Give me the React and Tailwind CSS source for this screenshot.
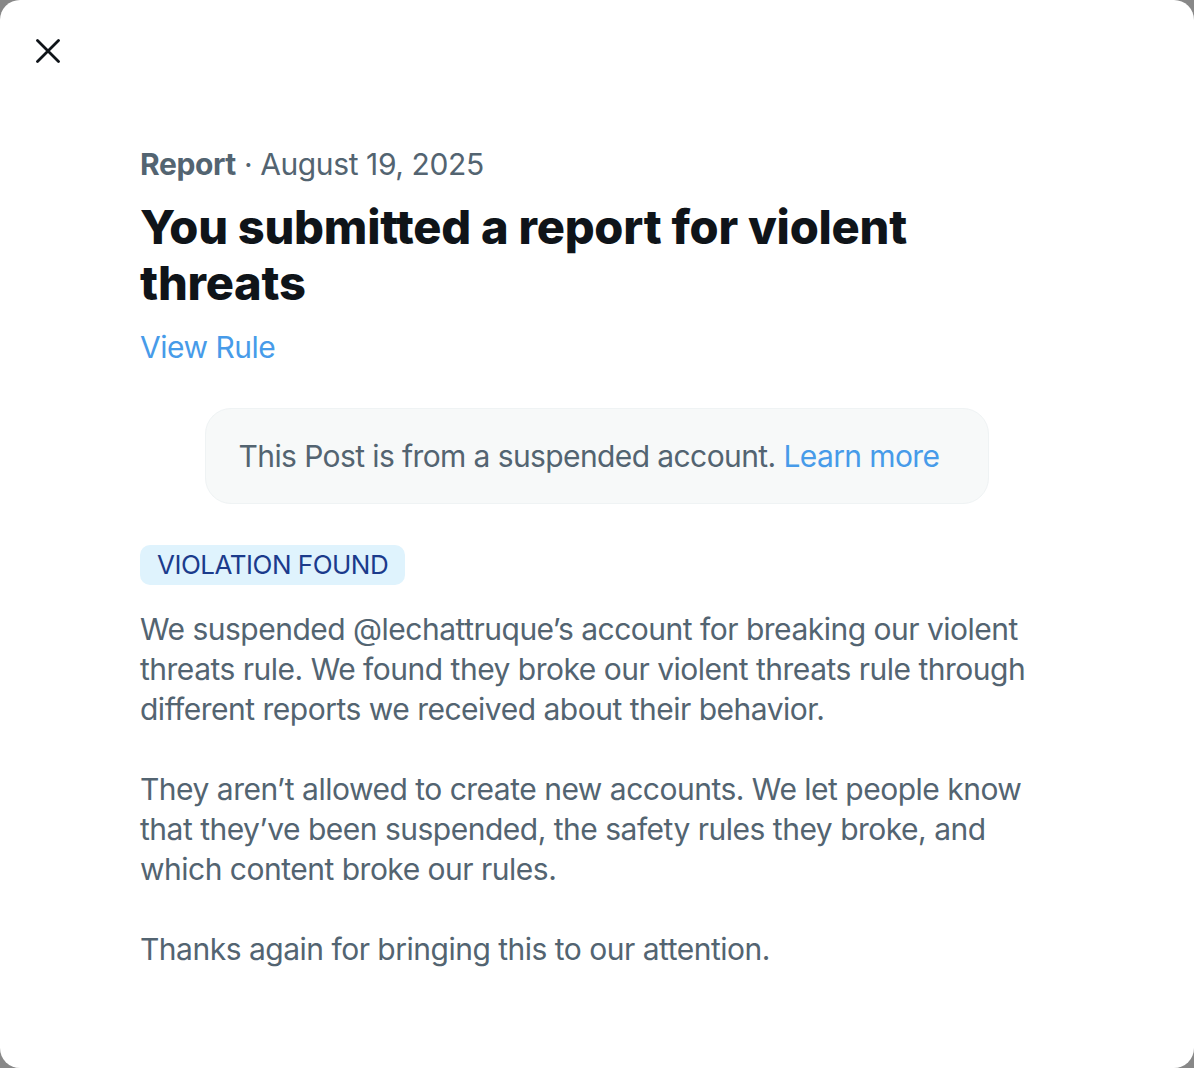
export default function App() {
  return (
    <div className="w-[1194px] h-[1068px] bg-[#888888]" style={{ fontFamily: "Inter, 'Noto Sans', sans-serif" }}>
      <div className="w-full h-full bg-white rounded-[20px] flex flex-col">
        <div className="pt-[39px] pl-[36px]">
          <button className="w-[24px] h-[24px] flex items-center justify-center">
            <svg width="24" height="24" viewBox="0 0 24 24" fill="none" stroke="#0f1419" strokeWidth="2.8" strokeLinecap="round">
              <path d="M1.5 1.5 L22.5 22.5 M22.5 1.5 L1.5 22.5" />
            </svg>
          </button>
        </div>
        <div className="px-[140px] pt-[81px] flex flex-col">
          <div className="text-[30px] leading-[40px] text-[#536471] tracking-[-0.4px]">
            <span className="font-bold">Report</span> · August 19, 2025
          </div>
          <h1 className="mt-[15px] text-[47px] leading-[56px] font-extrabold text-[#0f1419] tracking-[-0.25px]">
            You submitted a report for violent<br />threats
          </h1>
          <a className="mt-[16px] text-[30px] leading-[40px] text-[#479be9] tracking-[-0.5px]">View Rule</a>
          <div className="mt-[41px] flex justify-center">
            <div className="pl-[33px] pr-[49px] py-[27px] rounded-[26px] bg-[#f7f9f9] border border-[#eff3f4] text-[30px] leading-[40px] text-[#536471] tracking-[-0.6px]">
              This Post is from a suspended account. <span className="text-[#479be9]">Learn more</span>
            </div>
          </div>
          <div className="mt-[41px] flex">
            <div className="h-[40px] px-[17px] rounded-[10px] bg-[#dff3fd] text-[#1b3b8c] text-[26px] leading-[40px] tracking-[-0.5px]">
              VIOLATION FOUND
            </div>
          </div>
          <div className="mt-[24px] text-[30px] leading-[40px] text-[#536471] tracking-[-0.5px] flex flex-col gap-[40px]">
            <p>
              We suspended @lechattruque’s account for breaking our violent<br />
              threats rule. We found they broke our violent threats rule through<br />
              different reports we received about their behavior.
            </p>
            <p>
              They aren’t allowed to create new accounts. We let people know<br />
              that they’ve been suspended, the safety rules they broke, and<br />
              which content broke our rules.
            </p>
            <p>Thanks again for bringing this to our attention.</p>
          </div>
        </div>
      </div>
    </div>
  );
}
